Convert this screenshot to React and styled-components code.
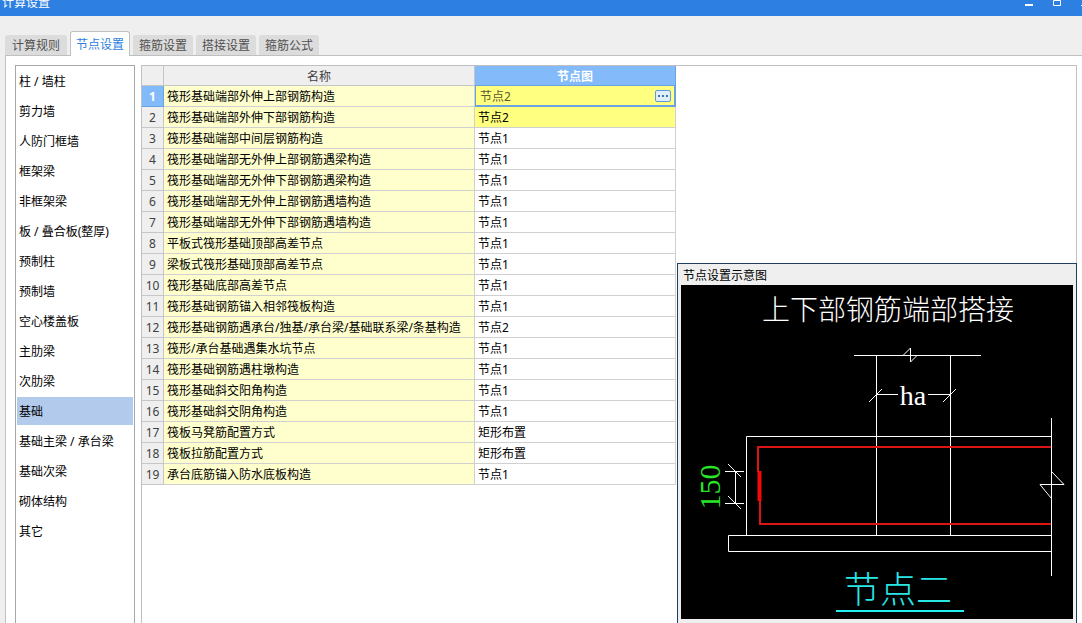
import React, { useState } from "react";
import styled, { createGlobalStyle, css } from "styled-components";

const GlobalStyle = createGlobalStyle`
  *, *::before, *::after { box-sizing: border-box; }
  body {
    margin: 0;
    background: #efefef;
    color: #000;
    font: 12px/16px "Noto Sans", "Noto Sans CJK SC", sans-serif;
  }
  button { font: inherit; color: inherit; }
`;

const Window = styled.div`
  display: flex;
  flex-direction: column;
  min-height: 100vh;
  overflow: hidden;
`;

const TitleBar = styled.header`
  display: flex;
  align-items: center;
  justify-content: space-between;
  height: 28px;
  margin: -12px -17px 0 0;
  padding-left: 2px;
  background: #2d80e1;
  color: #fff;
`;

const Title = styled.h1`
  margin: 0;
  padding-top: 2px;
  font-size: 12px;
  font-weight: 400;
`;

const WindowButtons = styled.div`
  display: flex;
`;

const WindowButton = styled.button`
  display: grid;
  place-items: center;
  width: 28px;
  height: 28px;
  padding: 0;
  border: 0;
  background: none;
`;

const Tabs = styled.nav`
  display: flex;
  align-items: flex-end;
  gap: 3px;
  height: 39px;
  padding-left: 5px;
`;

const Tab = styled.button`
  height: 20px;
  padding: 2px 6px 0;
  border: 0;
  border-radius: 3px 3px 0 0;
  background: #dcdcdc;
  color: #505050;

  &:first-child { padding: 2px 7px 0; }

  ${(p) =>
    p.$active &&
    css`
      height: 25px;
      margin-bottom: -1px;
      padding: 2px 5px 0;
      border: 1px solid #c0c0c0;
      border-bottom: 0;
      background: #fff;
      color: #2d80e1;
      z-index: 1;
    `}
`;

const Page = styled.main`
  display: flex;
  flex: 1;
  gap: 6px;
  margin-left: 5px;
  padding: 9px 5px 0 9px;
  border: solid #c0c0c0;
  border-width: 1px 0 0 1px;
  background: #fff;
`;

const CategoryList = styled.ul`
  display: flex;
  flex: none;
  flex-direction: column;
  gap: 2px;
  width: 120px;
  margin: 0;
  padding: 1px;
  list-style: none;
  border: solid #a8a8a8;
  border-width: 1px 1px 0;
`;

const Category = styled.button`
  display: block;
  width: 100%;
  height: 28px;
  padding: 2px 2px 0;
  border: 0;
  background: ${(p) => (p.$active ? "#b2cbec" : "transparent")};
  text-align: left;
  white-space: nowrap;
`;

const Workspace = styled.section`
  display: grid;
  flex: 1;
  grid-template-columns: 534px minmax(0, 1fr);
  column-gap: 1px;
  border: solid #c0c0c0;
  border-width: 1px 1px 0;
`;

const Grid = styled.table`
  align-self: start;
  width: 100%;
  table-layout: fixed;
  border-collapse: separate;
  border-spacing: 0;
`;

const NumberCol = styled.col`
  width: 22px;
`;

const ValueCol = styled.col`
  width: 201px;
`;

const ColumnHead = styled.th`
  height: 20px;
  padding: 2px 0 0;
  border: solid #c6c6c6;
  border-width: 0 1px 1px 0;
  background: ${(p) => (p.$active ? "#82bafa" : "#efefef")};
  border-color: ${(p) => (p.$active ? "#6aa3e0" : "#c6c6c6")};
  color: ${(p) => (p.$active ? "#fff" : "#404040")};
  font-weight: ${(p) => (p.$active ? 700 : 400)};
`;

const RowHead = styled(ColumnHead)`
  height: 21px;
`;

const Cell = styled.td`
  height: 21px;
  padding: 2px 3px 0;
  border: solid #d0d0d0;
  border-width: 0 1px 1px 0;
  background: ${(p) => p.$fill || "#fff"};
  white-space: nowrap;
`;

const EditedCell = styled(Cell)`
  padding: 2px 4px 0 5px;
  border-color: #6aa3e0;
  box-shadow: inset 1px 0 #6aa3e0, inset 0 -1px #6aa3e0, inset -1px 0 #6aa3e0;
  color: #5a5a30;
`;

const Editor = styled.div`
  display: flex;
  align-items: flex-start;
  justify-content: space-between;
`;

const MoreButton = styled.button`
  display: grid;
  place-items: center;
  width: 16px;
  height: 12px;
  margin-top: 1px;
  padding: 0;
  border: 1px solid #5f9ad8;
  border-radius: 2px;
  background: #e0eefc;
`;

const Preview = styled.aside`
  align-self: end;
  margin-right: -1px;
  padding: 0 3px 4px;
  border: solid #1f4060;
  border-width: 1px 1px 0;
  background: #efefef;
`;

const PreviewTitle = styled.h2`
  height: 21px;
  margin: 0;
  padding-left: 2px;
  font-size: 12px;
  font-weight: 400;
  line-height: 24px;
`;

const Drawing = styled.svg`
  display: block;
  width: 100%;
  background: #000;
`;

const DrawingText = styled.text`
  font-family: "Liberation Serif", "Noto Sans CJK SC", serif;
  font-size: ${(p) => p.$size}px;
  font-weight: 300;
  text-anchor: middle;
`;

const tabs = ["计算规则", "节点设置", "箍筋设置", "搭接设置", "箍筋公式"];

const categories = [
  "柱 / 墙柱", "剪力墙", "人防门框墙", "框架梁", "非框架梁", "板 / 叠合板(整厚)",
  "预制柱", "预制墙", "空心楼盖板", "主肋梁", "次肋梁", "基础",
  "基础主梁 / 承台梁", "基础次梁", "砌体结构", "其它",
];

const rows = [
  ["筏形基础端部外伸上部钢筋构造", "节点2"],
  ["筏形基础端部外伸下部钢筋构造", "节点2"],
  ["筏形基础端部中间层钢筋构造", "节点1"],
  ["筏形基础端部无外伸上部钢筋遇梁构造", "节点1"],
  ["筏形基础端部无外伸下部钢筋遇梁构造", "节点1"],
  ["筏形基础端部无外伸上部钢筋遇墙构造", "节点1"],
  ["筏形基础端部无外伸下部钢筋遇墙构造", "节点1"],
  ["平板式筏形基础顶部高差节点", "节点1"],
  ["梁板式筏形基础顶部高差节点", "节点1"],
  ["筏形基础底部高差节点", "节点1"],
  ["筏形基础钢筋锚入相邻筏板构造", "节点1"],
  ["筏形基础钢筋遇承台/独基/承台梁/基础联系梁/条基构造", "节点2"],
  ["筏形/承台基础遇集水坑节点", "节点1"],
  ["筏形基础钢筋遇柱墩构造", "节点1"],
  ["筏形基础斜交阳角构造", "节点1"],
  ["筏形基础斜交阴角构造", "节点1"],
  ["筏板马凳筋配置方式", "矩形布置"],
  ["筏板拉筋配置方式", "矩形布置"],
  ["承台底筋锚入防水底板构造", "节点1"],
];

function NodeDrawing() {
  return (
    <Drawing viewBox="0 0 392 334" role="img" aria-label="节点设置示意图">
      <DrawingText $size={28} x="207" y="35" fill="#fff">上下部钢筋端部搭接</DrawingText>
      <g fill="none" stroke="#fff">
        {/* column and its break line */}
        <path d="M173 70.5H300M195.5 70V250M269.5 70V250" />
        <path d="M222.500 70L229.500 63V77L236.500 70" />
        {/* column width dimension */}
        <path d="M195 109.500H217M247 109.500H269M188 117L201 104M262 117L275 104" />
        {/* slab and cushion */}
        <path d="M370 151.500H65.500V250M370 250.500H47.500V266.500H370" />
        <path d="M370.500 133V291M371 187L383 199.500H359L370 213" />
        {/* lap length dimension */}
        <path d="M44 186.500H63M44 218.500H63M54.500 186V218M47 179L60 192M47 211L60 224" />
      </g>
      <g fill="none" stroke="#dc1414" strokeWidth="2">
        <path d="M370 162H77V187M79 215V239H370" />
        <path d="M78.500 186V216" stroke="#f00a0a" strokeWidth="4" />
      </g>
      <DrawingText $size={28} x="232" y="120" fill="#fff">ha</DrawingText>
      <DrawingText $size={30} transform="translate(39 202) rotate(-90)" fill="#28e628">150</DrawingText>
      <DrawingText $size={36} x="217" y="318" fill="#28e6e6">节点二</DrawingText>
      <path d="M155 326H283" stroke="#1ef0f0" strokeWidth="2" />
    </Drawing>
  );
}

export default function App() {
  const [tab, setTab] = useState(1);
  const [category, setCategory] = useState(11);

  return (
    <Window>
      <GlobalStyle />
      <TitleBar>
        <Title>计算设置</Title>
        <WindowButtons>
          <WindowButton aria-label="最小化">
            <svg width="8" height="8"><path d="M0 7H8" stroke="#fff" strokeWidth="2" /></svg>
          </WindowButton>
          <WindowButton aria-label="最大化">
            <svg width="8" height="8"><path d="M.5 2.500H7.500V7.500H.5Z" fill="none" stroke="#fff" /></svg>
          </WindowButton>
          <WindowButton aria-label="关闭">
            <svg width="8" height="8"><path d="M0 0L8 8M8 0L0 8" stroke="#fff" /></svg>
          </WindowButton>
        </WindowButtons>
      </TitleBar>

      <Tabs>
        {tabs.map((name, i) => (
          <Tab key={name} $active={i === tab} onClick={() => setTab(i)}>{name}</Tab>
        ))}
      </Tabs>

      <Page>
        <CategoryList>
          {categories.map((name, i) => (
            <li key={name}>
              <Category $active={i === category} onClick={() => setCategory(i)}>{name}</Category>
            </li>
          ))}
        </CategoryList>

        <Workspace>
          <Grid>
            <colgroup>
              <NumberCol />
              <col />
              <ValueCol />
            </colgroup>
            <thead>
              <tr>
                <ColumnHead />
                <ColumnHead scope="col">名称</ColumnHead>
                <ColumnHead scope="col" $active>节点图</ColumnHead>
              </tr>
            </thead>
            <tbody>
              {rows.map(([name, value], i) => (
                <tr key={name}>
                  <RowHead scope="row" $active={i === 0}>{i + 1}</RowHead>
                  <Cell $fill="#ffffce">{name}</Cell>
                  {i === 0 ? (
                    <EditedCell $fill="#ffff80">
                      <Editor>
                        {value}
                        <MoreButton aria-label="选择节点图">
                          <svg width="10" height="2" fill="#3c78b4">
                            <path d="M0 0h2v2H0zM4 0h2v2H4zM8 0h2v2H8z" />
                          </svg>
                        </MoreButton>
                      </Editor>
                    </EditedCell>
                  ) : (
                    <Cell $fill={i === 1 ? "#ffff80" : "#fff"}>{value}</Cell>
                  )}
                </tr>
              ))}
            </tbody>
          </Grid>

          <Preview>
            <PreviewTitle>节点设置示意图</PreviewTitle>
            <NodeDrawing />
          </Preview>
        </Workspace>
      </Page>
    </Window>
  );
}
